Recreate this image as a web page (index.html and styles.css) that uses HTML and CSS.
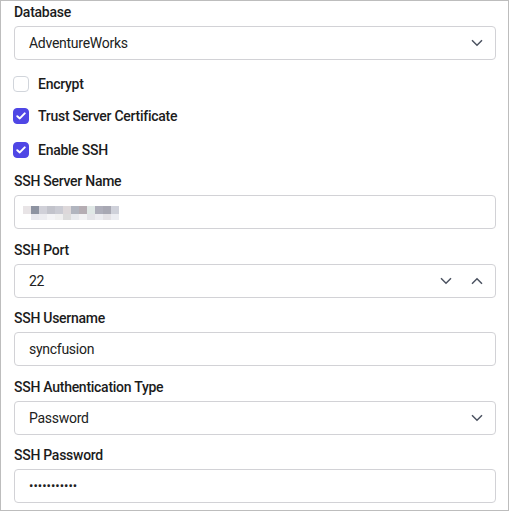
FILE: index.html
```html
<!DOCTYPE html>
<html>
<head>
<meta charset="utf-8">
<link rel="stylesheet" href="styles.css">
</head>
<body>
<div class="panel">
  <div class="field">
    <div class="label">Database</div>
    <div class="input">
      <span class="value">AdventureWorks</span>
      <svg class="chev" width="12" height="8" viewBox="0 0 12 8"><path d="M1 1.2 L6 6.2 L11 1.2" fill="none" stroke="#4b5260" stroke-width="1.5"/></svg>
    </div>
  </div>

  <div class="checks">
    <div class="check">
      <span class="box"></span>
      <span class="clabel">Encrypt</span>
    </div>
    <div class="check">
      <span class="box on"><svg width="10" height="8" viewBox="0 0 10 8"><path d="M1.3 4.2 L3.8 6.4 L8.7 1.4" fill="none" stroke="#fff" stroke-width="2" stroke-linecap="round" stroke-linejoin="round"/></svg></span>
      <span class="clabel">Trust Server Certificate</span>
    </div>
    <div class="check">
      <span class="box on"><svg width="10" height="8" viewBox="0 0 10 8"><path d="M1.3 4.2 L3.8 6.4 L8.7 1.4" fill="none" stroke="#fff" stroke-width="2" stroke-linecap="round" stroke-linejoin="round"/></svg></span>
      <span class="clabel">Enable SSH</span>
    </div>
  </div>

  <div class="field">
    <div class="label">SSH Server Name</div>
    <div class="input">
      <div class="blur">
        <div class="brow top">
          <i style="background:#e8e4e6"></i><i style="background:#8d93a1"></i><i style="background:#d0d0d8"></i><i style="background:#c2c3cb"></i><i style="background:#cacbd3"></i><i style="background:#ddd8da"></i><i style="background:#b1b5bf"></i><i style="background:#b5adb3"></i><i style="background:#e0e8e6"></i><i style="background:#aeaeba"></i><i style="background:#a8a8b3"></i><i style="background:#cfd1da"></i>
        </div>
        <div class="brow bot">
          <i style="background:#ffffff"></i><i style="background:#e8e8ee"></i><i style="background:#ececf0"></i><i style="background:#f4f4f6"></i><i style="background:#f0f0f0"></i><i style="background:#dcdcdc"></i><i style="background:#e8eaee"></i><i style="background:#f2f2f4"></i><i style="background:#e4e4e8"></i><i style="background:#ececf0"></i><i style="background:#e4e2e6"></i><i style="background:#ecedf2"></i>
        </div>
      </div>
    </div>
  </div>

  <div class="field tight">
    <div class="label">SSH Port</div>
    <div class="input">
      <span class="value">22</span>
      <svg class="spin" width="12" height="8" viewBox="0 0 12 8"><path d="M1 1.2 L6 6.2 L11 1.2" fill="none" stroke="#4b5260" stroke-width="1.5"/></svg>
      <svg class="spin up" width="12" height="8" viewBox="0 0 12 8"><path d="M1 6.8 L6 1.8 L11 6.8" fill="none" stroke="#4b5260" stroke-width="1.5"/></svg>
    </div>
  </div>

  <div class="field">
    <div class="label">SSH Username</div>
    <div class="input">
      <span class="value">syncfusion</span>
    </div>
  </div>

  <div class="field tight">
    <div class="label">SSH Authentication Type</div>
    <div class="input">
      <span class="value">Password</span>
      <svg class="chev" width="12" height="8" viewBox="0 0 12 8"><path d="M1 1.2 L6 6.2 L11 1.2" fill="none" stroke="#4b5260" stroke-width="1.5"/></svg>
    </div>
  </div>

  <div class="field last">
    <div class="label">SSH Password</div>
    <div class="input">
      <span class="value dots">•••••••••••</span>
    </div>
  </div>
</div>
</body>
</html>
```

FILE: styles.css
```css
html, body {
  margin: 0;
  padding: 0;
  background: #ffffff;
}

body {
  font-family: Roboto, "Liberation Sans", sans-serif;
  font-size: 14px;
  letter-spacing: -0.27px;
  color: #212121;
}

.panel {
  box-sizing: border-box;
  width: 509px;
  height: 511px;
  border: 1px solid #bdbdbd;
  padding: 0 12px 0 13px;
  display: flex;
  flex-direction: column;
}

.field {
  display: flex;
  flex-direction: column;
  margin-bottom: 10px;
}

.field.tight {
  margin-bottom: 9px;
}

.field.last {
  margin-bottom: 0;
}

.label {
  font-weight: 500;
  line-height: 22px;
  height: 22px;
  color: #1c1c1c;
  margin-bottom: 3px;
}

.input {
  box-sizing: border-box;
  height: 34px;
  border: 1px solid #d2d2d6;
  border-radius: 4px;
  display: flex;
  align-items: center;
  padding: 0 12px 0 14px;
}

.value {
  flex: 1;
  line-height: 20px;
  color: #212121;
}

.chev {
  display: block;
}

.spin {
  display: block;
}

.spin.up {
  margin-left: 19px;
}

.checks {
  display: flex;
  flex-direction: column;
  margin-top: 4px;
  margin-bottom: 10px;
}

.check {
  display: flex;
  align-items: center;
  height: 20px;
  margin-left: -1px;
}

.check + .check {
  margin-top: 12px;
}

.check + .check + .check {
  margin-top: 14px;
}

.box {
  box-sizing: border-box;
  width: 16px;
  height: 16px;
  border: 1px solid #d1d5db;
  border-radius: 4px;
  background: #fff;
  display: flex;
  align-items: center;
  justify-content: center;
  margin-right: 9px;
}

.box.on {
  background: #4f46e5;
  border-color: #4f46e5;
}

.box svg {
  display: block;
}

.clabel {
  font-weight: 500;
  line-height: 20px;
  color: #1c1c1c;
}

.blur {
  display: flex;
  flex-direction: column;
  margin-left: -6px;
  margin-top: 2px;
}

.brow {
  display: flex;
}

.brow i {
  display: block;
  width: 8px;
}

.brow.top i {
  height: 8px;
}

.brow.bot i {
  height: 6px;
}

.dots {
  font-size: 13px;
  letter-spacing: 0;
  color: #212121;
}
```
